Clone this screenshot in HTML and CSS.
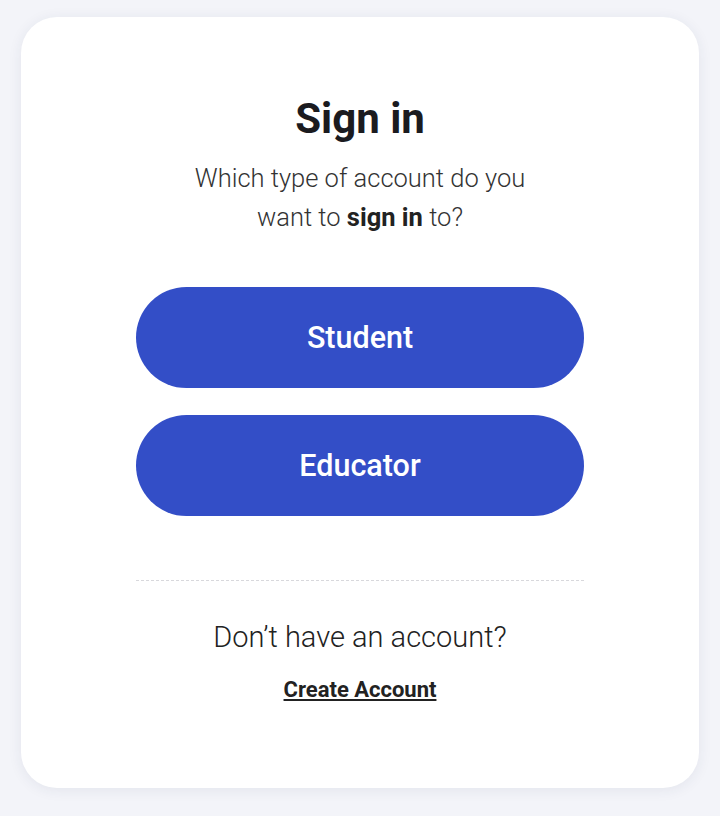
FILE: index.html
```html
<html>
  <head>
    <link rel="stylesheet" href="styles.css">
  </head>
  <body>
    <div class="card">
      <h1 class="title">Sign in</h1>
      <p class="lead">Which type of account do you<br>want to <b>sign in</b> to?</p>

      <div class="choices">
        <a class="pill" href="#">Student</a>
        <a class="pill" href="#">Educator</a>
      </div>

      <hr class="divider">

      <p class="ask">Don’t have an account?</p>
      <a class="create" href="#">Create Account</a>
    </div>
  </body>
</html>
```

FILE: styles.css
```css
body {
  margin: 0;
  background: #f3f4f9;
  font-family: Roboto, sans-serif;
}

.card {
  margin: 17px 21px 0;
  height: 771px;
  box-sizing: border-box;
  padding: 78px 115px 0;
  background: #fff;
  border-radius: 36px;
  box-shadow: 0 2px 14px rgba(40, 45, 90, 0.08);
  display: flex;
  flex-direction: column;
  align-items: center;
  text-align: center;
}

.title {
  margin: 0;
  font-size: 42px;
  line-height: 48px;
  font-weight: 700;
  color: #1b1b1f;
}

.lead {
  margin: 16px 0 0;
  font-size: 25.5px;
  line-height: 39px;
  font-weight: 300;
  color: #333;
}

.lead b {
  font-weight: 700;
  color: #222;
}

.choices {
  margin-top: 50px;
  width: 100%;
  display: flex;
  flex-direction: column;
  gap: 27px;
}

.pill {
  display: flex;
  align-items: center;
  justify-content: center;
  height: 101px;
  border-radius: 51px;
  background: #334ec7;
  color: #fff;
  font-size: 30.5px;
  font-weight: 500;
  text-decoration: none;
}

.divider {
  width: 100%;
  margin: 64px 0 0;
  border: 0;
  border-top: 1px dashed #d8d8dc;
}

.ask {
  margin: 38px 0 0;
  font-size: 29px;
  line-height: 36px;
  font-weight: 300;
  color: #222;
}

.create {
  margin-top: 22px;
  font-size: 22px;
  font-weight: 700;
  color: #222;
  text-decoration: underline;
  text-decoration-thickness: 2px;
  text-underline-offset: 2px;
}
```
